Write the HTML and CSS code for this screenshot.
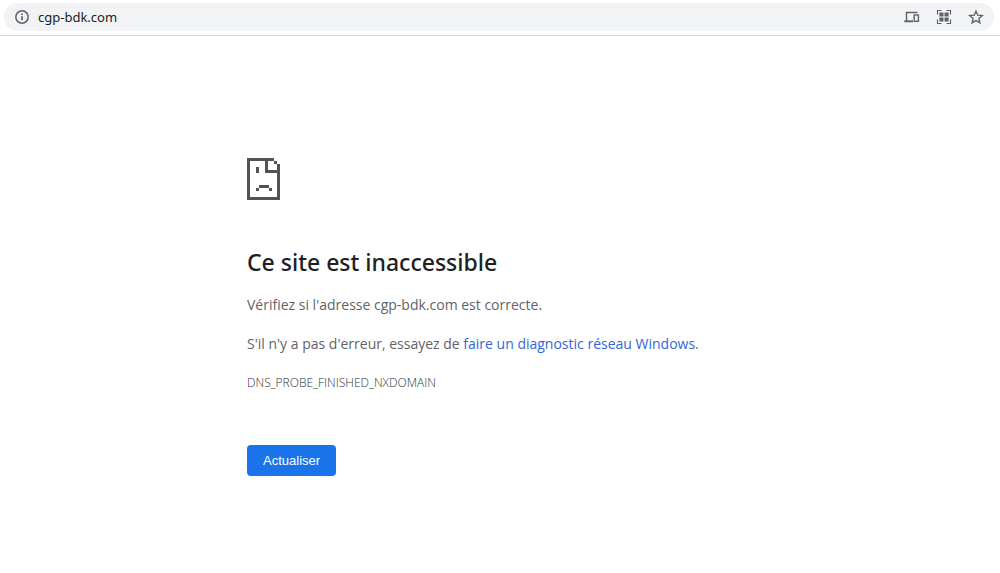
FILE: index.html
```html
<!DOCTYPE html>
<html lang="fr">
<head>
<meta charset="utf-8">
<meta name="viewport" content="width=device-width, initial-scale=1">
<title>cgp-bdk.com</title>
<link rel="stylesheet" href="styles.css">
</head>
<body>
<header class="toolbar">
  <div class="omnibox">
    <button class="icon-button" type="button" aria-label="Informations sur le site">
      <svg width="16" height="16" viewBox="0 0 16 16" fill="none" stroke="currentColor"><circle cx="8" cy="8" r="6.2" stroke-width="1.5"/><path d="M8 7.2v4.1M8 4.5v1.6" stroke-width="1.7"/></svg>
    </button>
    <input class="address" type="text" value="cgp-bdk.com" aria-label="Adresse" spellcheck="false">
    <div class="actions">
      <button class="icon-button" type="button" aria-label="Envoyer à vos appareils">
        <svg width="16" height="16" viewBox="0 0 16 16" fill="none" stroke="currentColor" stroke-width="1.4"><path d="M13.5 3.5H2.5v8.5"/><path d="M.3 12.3h8.7" stroke-width="1.9"/><rect x="10.2" y="6" width="4.2" height="6.3"/></svg>
      </button>
      <button class="icon-button" type="button" aria-label="Créer un code QR">
        <svg width="16" height="16" viewBox="0 0 16 16"><path fill="none" stroke="currentColor" stroke-width="1.1" d="M1.5 5.5v-4h4M10.5 1.5h4v4M14.5 10.5v4h-4M5.5 14.5h-4v-4"/><path fill="currentColor" d="M3.4 3.4h4.1v4.1H3.4zM8.5 3.4h4.1v4.1H8.5zM3.4 8.5h4.1v4.1H3.4zM8.5 8.5h4.1v4.1H8.5z"/></svg>
      </button>
      <button class="icon-button" type="button" aria-label="Ajouter aux favoris">
        <svg width="16" height="16" viewBox="0 0 16 16" fill="none" stroke="currentColor" stroke-width="1.4"><path d="M8 2.2l1.8 4 4.5.4-3.4 3 1 4.3L8 11.6l-3.9 2.3 1-4.3-3.4-3 4.5-.4z"/></svg>
      </button>
    </div>
  </div>
</header>
<main class="error">
  <svg class="sad-page" width="33" height="42" viewBox="0 0 33 42" shape-rendering="crispEdges" fill="currentColor" aria-hidden="true"><path d="M0 0h27v3h-6v9h9V6h3v36H0zM3 3v36h27V15H18V3zM27 3h3v3h-3zM9 9h3v6H9zM12 27h10v3H12zM9 30h3v3H9zM22 30h3v3h-3z" fill-rule="evenodd"/></svg>
  <h1 class="title">Ce site est inaccessible</h1>
  <p class="text">Vérifiez si l'adresse cgp-bdk.com est correcte.</p>
  <p class="text">S'il n'y a pas d'erreur, essayez de <a class="link" href="#diagnostic">faire un diagnostic réseau Windows</a>.</p>
  <p class="code">DNS_PROBE_FINISHED_NXDOMAIN</p>
  <button class="reload" type="button">Actualiser</button>
</main>
</body>
</html>
```

FILE: styles.css
```css
* { box-sizing: border-box; }

body {
  margin: 0;
  background: #fff;
  color: #5f6368;
  font-family: "Open Sans", "Noto Sans", sans-serif;
}

.toolbar {
  padding: 3px 6px 4px 4px;
  border-bottom: 1px solid #d5d7da;
}

.omnibox {
  display: flex;
  align-items: center;
  height: 28px;
  padding: 0 10px;
  border-radius: 14px;
  background: #f1f3f4;
}

.icon-button {
  display: flex;
  padding: 0;
  border: 0;
  background: none;
  color: #5f6368;
}

.address {
  flex: 1;
  min-width: 0;
  margin-left: 8px;
  padding: 0;
  border: 0;
  outline: 0;
  background: none;
  color: #202124;
  font: 13px/20px "Noto Sans", "Open Sans", sans-serif;
}

.actions {
  display: flex;
  gap: 16px;
}

.error {
  max-width: 600px;
  margin: 0 auto;
  padding: 122px 47px 40px;
}

.sad-page {
  display: block;
  color: #535353;
}

.title {
  margin: 48px 0 16px;
  color: #202124;
  font-family: "Noto Sans", "Open Sans", sans-serif;
  font-size: 23px;
  font-weight: 500;
  line-height: 29px;
}

.text {
  margin: 0 0 15px;
  font-size: 14px;
  line-height: 24px;
}

.link {
  color: #3367d6;
  text-decoration: none;
}

.code {
  margin: 0 0 50px;
  color: #303338;
  font-size: 12px;
  font-weight: 300;
  line-height: 24px;
}

.reload {
  height: 31px;
  padding: 0 16px;
  border: 0;
  border-radius: 4px;
  background: #1a73e8;
  color: #fff;
  font: 13px/20px "Liberation Sans", Arial, sans-serif;
}
```
